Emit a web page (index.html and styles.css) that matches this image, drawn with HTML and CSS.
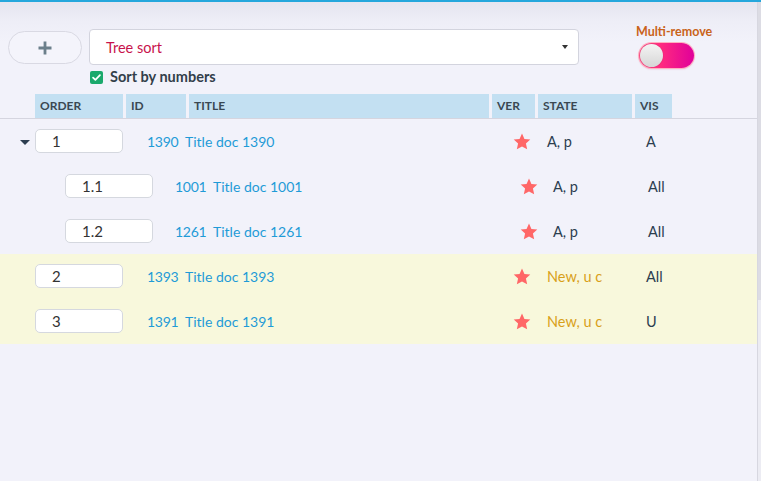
FILE: index.html
```html
<!DOCTYPE html>
<html>
<head>
<meta charset="utf-8">
<link rel="stylesheet" href="styles.css">
</head>
<body>
<div class="page">
  <div class="main">
    <div class="toolbar">
      <button class="add-btn" type="button"><svg width="16" height="16" viewBox="0 0 16 16"><path d="M8 1.5v13M1.5 8h13" stroke="#6b7f8b" stroke-width="2.8" fill="none"/></svg></button>
      <div class="sort-col">
        <div class="select"><span class="select-text">Tree sort</span><span class="select-caret"></span></div>
        <label class="check"><span class="check-box"><svg width="14" height="14" viewBox="0 0 14 14"><path d="M3.3 7.2l2.5 2.4 4.9-5.1" stroke="#fff" stroke-width="1.9" fill="none" stroke-linecap="round" stroke-linejoin="round"/></svg></span>Sort by numbers</label>
      </div>
      <div class="multi">
        <div class="multi-label">Multi-remove</div>
        <div class="toggle"><span class="knob"></span></div>
      </div>
    </div>

    <div class="thead">
      <div class="th th-order">ORDER</div>
      <div class="th th-id">ID</div>
      <div class="th th-title">TITLE</div>
      <div class="th th-ver">VER</div>
      <div class="th th-state">STATE</div>
      <div class="th th-vis">VIS</div>
    </div>

    <div class="tbody">
      <div class="row top">
        <div class="c-lead"><span class="tri"></span></div>
        <div class="c-order"><div class="order-input">1</div></div>
        <div class="c-id">1390</div>
        <div class="c-title">Title doc 1390</div>
        <div class="c-ver"><svg class="star" width="18" height="17" viewBox="0 0 24 23"><path d="M12 0.8l3.3 7.2 7.9 0.9-5.9 5.4 1.7 7.8L12 18.1l-7 4 1.7-7.8L0.8 8.9l7.9-0.9z"/></svg></div>
        <div class="c-state">A, p</div>
        <div class="c-vis">A</div>
      </div>
      <div class="row child">
        <div class="c-lead"></div>
        <div class="c-order"><div class="order-input">1.1</div></div>
        <div class="c-id">1001</div>
        <div class="c-title">Title doc 1001</div>
        <div class="c-ver"><svg class="star" width="18" height="17" viewBox="0 0 24 23"><path d="M12 0.8l3.3 7.2 7.9 0.9-5.9 5.4 1.7 7.8L12 18.1l-7 4 1.7-7.8L0.8 8.9l7.9-0.9z"/></svg></div>
        <div class="c-state">A, p</div>
        <div class="c-vis">All</div>
      </div>
      <div class="row child">
        <div class="c-lead"></div>
        <div class="c-order"><div class="order-input">1.2</div></div>
        <div class="c-id">1261</div>
        <div class="c-title">Title doc 1261</div>
        <div class="c-ver"><svg class="star" width="18" height="17" viewBox="0 0 24 23"><path d="M12 0.8l3.3 7.2 7.9 0.9-5.9 5.4 1.7 7.8L12 18.1l-7 4 1.7-7.8L0.8 8.9l7.9-0.9z"/></svg></div>
        <div class="c-state">A, p</div>
        <div class="c-vis">All</div>
      </div>
      <div class="row top new">
        <div class="c-lead"></div>
        <div class="c-order"><div class="order-input">2</div></div>
        <div class="c-id">1393</div>
        <div class="c-title">Title doc 1393</div>
        <div class="c-ver"><svg class="star" width="18" height="17" viewBox="0 0 24 23"><path d="M12 0.8l3.3 7.2 7.9 0.9-5.9 5.4 1.7 7.8L12 18.1l-7 4 1.7-7.8L0.8 8.9l7.9-0.9z"/></svg></div>
        <div class="c-state">New, u c</div>
        <div class="c-vis">All</div>
      </div>
      <div class="row top new">
        <div class="c-lead"></div>
        <div class="c-order"><div class="order-input">3</div></div>
        <div class="c-id">1391</div>
        <div class="c-title">Title doc 1391</div>
        <div class="c-ver"><svg class="star" width="18" height="17" viewBox="0 0 24 23"><path d="M12 0.8l3.3 7.2 7.9 0.9-5.9 5.4 1.7 7.8L12 18.1l-7 4 1.7-7.8L0.8 8.9l7.9-0.9z"/></svg></div>
        <div class="c-state">New, u c</div>
        <div class="c-vis">U</div>
      </div>
    </div>
  </div>
  <div class="scrollbar"><div class="scroll-thumb"></div></div>
</div>
</body>
</html>
```

FILE: styles.css
```css
* { box-sizing: border-box; }

html, body {
  margin: 0;
  padding: 0;
  height: 100%;
}

body {
  font-family: Lato, "Source Sans Pro", "Noto Sans", sans-serif;
  font-size: 14.5px;
  color: #2c3e50;
  background: #f2f2fa;
}

.page {
  display: flex;
  min-height: 100%;
  border-top: 2px solid #25a7dc;
  background: linear-gradient(to bottom, #e5e5ef 0px, #eeeef7 20px, #f2f2fa 40px, #f2f2fa 100%);
}

.main {
  flex: 1;
  min-width: 0;
}

.scrollbar {
  width: 4px;
  border-left: 1px solid #d7d7e0;
  background: #ececf3;
}

.scroll-thumb {
  height: 298px;
  background: #dcdce4;
}

/* toolbar */
.toolbar {
  display: flex;
  align-items: flex-start;
  height: 92px;
  padding: 27px 0 0 8px;
}

.add-btn {
  width: 74px;
  height: 33px;
  margin-top: 2px;
  border: 1px solid #d9d9e3;
  border-radius: 17px;
  background: #f4f4fb;
  display: flex;
  align-items: center;
  justify-content: center;
  padding: 0;
}

.sort-col {
  margin-left: 7px;
  display: flex;
  flex-direction: column;
}

.select {
  width: 490px;
  height: 36px;
  background: #fff;
  border: 1px solid #d3d4de;
  border-radius: 4px;
  display: flex;
  align-items: center;
  justify-content: space-between;
  padding: 0 10px 0 16px;
}

.select-text {
  color: #c8124c;
  font-size: 14.5px;
}

.select-caret {
  width: 0;
  height: 0;
  border-left: 3.5px solid transparent;
  border-right: 3.5px solid transparent;
  border-top: 4px solid #333;
  margin-top: -1px;
}

.check {
  display: flex;
  align-items: center;
  margin-top: 5px;
  margin-left: 1px;
  font-weight: bold;
  font-size: 14.5px;
  color: #333f4a;
  line-height: 14px;
}

.check-box {
  width: 13px;
  height: 13px;
  border-radius: 2px;
  background: #1ba96c;
  display: flex;
  align-items: center;
  justify-content: center;
  margin-right: 7px;
}

.check-box svg {
  width: 13px;
  height: 13px;
}

.multi {
  margin-left: 57px;
  margin-top: -4px;
  display: flex;
  flex-direction: column;
}

.multi-label {
  font-size: 12.5px;
  font-weight: bold;
  color: #c9631a;
  line-height: 14px;
}

.toggle {
  margin-top: 4px;
  margin-left: 3px;
  width: 55px;
  height: 25px;
  border-radius: 13px;
  background: linear-gradient(to right, #ff4d86 0%, #ff2a80 40%, #e0009a 100%);
  box-shadow: 0 0 0 1px #ffb0c0, 0 1px 2px rgba(200, 0, 80, 0.25);
  padding: 1px;
}

.knob {
  display: block;
  width: 23px;
  height: 23px;
  border-radius: 50%;
  background: linear-gradient(to bottom, #f4f4f4, #d6d6d6);
  box-shadow: 0 0 1px rgba(0,0,0,0.3);
}

/* header */
.thead {
  display: flex;
  gap: 3px;
  padding-left: 35px;
  height: 25px;
  border-bottom: 1px solid #d5d5df;
}

.th {
  height: 24px;
  line-height: 24px;
  background: #c3e0f2;
  font-size: 12px;
  font-weight: bold;
  color: #3a4853;
  padding-left: 5px;
}

.th-order { width: 88px; }
.th-id { width: 60px; }
.th-title { width: 300px; }
.th-ver { width: 43px; }
.th-state { width: 94px; }
.th-vis { width: 37px; }

/* rows */
.row {
  display: grid;
  align-items: center;
  height: 45px;
}

.row.top {
  grid-template-columns: 35px 88px 62px 328px 18px 115px 1fr;
}

.row.child {
  grid-template-columns: 65px 88px 60px 307px 18px 110px 1fr;
}

.row.new {
  background: #f8f8dc;
}

.c-lead {
  display: flex;
  justify-content: flex-end;
  padding-right: 5px;
}

.tri {
  width: 0;
  height: 0;
  border-left: 5px solid transparent;
  border-right: 5px solid transparent;
  border-top: 5px solid #2c3e50;
  margin-top: 2px;
}

.order-input {
  height: 24px;
  margin-top: -1px;
  background: #fff;
  border: 1px solid #d5d8df;
  border-radius: 5px;
  padding-left: 16px;
  line-height: 22px;
  font-size: 15px;
  color: #333;
}

.c-id {
  padding-left: 24px;
  color: #1f9bd7;
  font-size: 14px;
  letter-spacing: -0.3px;
}

.row.child .c-id {
  padding-left: 22px;
}

.c-title {
  color: #1f9bd7;
  font-size: 14px;
}

.c-ver {
  display: flex;
  justify-content: center;
}

.star {
  fill: #ff6767;
  display: block;
}

.c-state {
  padding-left: 16px;
}

.row.child .c-state {
  padding-left: 15px;
}

.row.new .c-state {
  color: #d8a019;
}
```
